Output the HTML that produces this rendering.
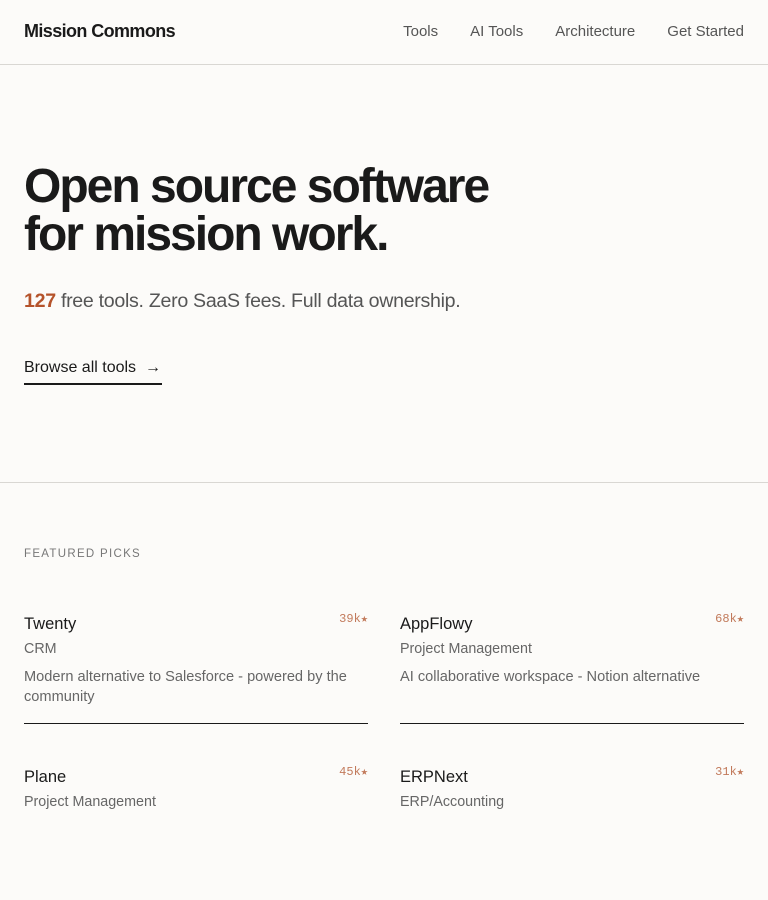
<!DOCTYPE html>
<html><head><style>
*{margin:0;padding:0;box-sizing:border-box}
body{width:768px;height:900px;background:#fcfbf9;font-family:"Liberation Sans",sans-serif;color:#1a1a1a;overflow:hidden;position:relative}
.hdr{height:65px;border-bottom:1px solid #d9d7d3;position:relative}
.logo{position:absolute;left:24px;top:21px;font-size:18px;font-weight:bold;letter-spacing:-0.6px}
.nav{position:absolute;right:24px;top:23px;font-size:15px;color:#555;white-space:nowrap}
.nav span{margin-left:32px}
h1{position:absolute;left:24px;top:163px;font-size:48px;line-height:48px;font-weight:bold;letter-spacing:-2px;white-space:nowrap}
.sub{position:absolute;left:24px;top:290px;font-size:19.6px;color:#555;letter-spacing:-0.3px;white-space:nowrap}
.sub b{color:#b5532b}
.btn{position:absolute;left:24px;top:359px;width:138px;font-size:16px;padding-bottom:6px;border-bottom:2px solid #1a1a1a;white-space:nowrap}
.div{position:absolute;left:0;right:0;top:482px;border-top:1px solid #d9d7d3}
.fp{position:absolute;left:24px;top:548px;font-size:11.5px;letter-spacing:1.3px;color:#777}
.card{position:absolute;width:344px}
.card .n{font-size:16.5px;position:absolute;top:1px;left:0}
.card .s{position:absolute;right:0;top:-3px;font-family:"Liberation Mono",monospace;font-size:12px;color:#c27a5b}
.card .c{position:absolute;top:27px;font-size:14.3px;color:#666}
.card .d{position:absolute;top:53px;font-size:14.6px;line-height:20px;color:#666;width:344px}
.card .l{position:absolute;top:109px;left:0;width:344px;border-top:1px solid #1a1a1a}
</style></head><body>
<div class="hdr"><div class="logo">Mission Commons</div>
<div class="nav"><span>Tools</span><span>AI Tools</span><span>Architecture</span><span>Get Started</span></div></div>
<h1>Open source software<br>for mission work.</h1>
<div class="sub"><b>127</b> free tools. Zero SaaS fees. Full data ownership.</div>
<div class="btn">Browse all tools &nbsp;→</div>
<div class="div"></div>
<div class="fp">FEATURED PICKS</div>
<div class="card" style="left:24px;top:614px"><div class="n">Twenty</div><div class="s">39k★</div><div class="c">CRM</div><div class="d">Modern alternative to Salesforce - powered by the community</div><div class="l"></div></div>
<div class="card" style="left:400px;top:614px"><div class="n">AppFlowy</div><div class="s">68k★</div><div class="c">Project Management</div><div class="d">AI collaborative workspace - Notion alternative</div><div class="l"></div></div>
<div class="card" style="left:24px;top:767px"><div class="n">Plane</div><div class="s">45k★</div><div class="c">Project Management</div></div>
<div class="card" style="left:400px;top:767px"><div class="n">ERPNext</div><div class="s">31k★</div><div class="c">ERP/Accounting</div></div>
</body></html>
